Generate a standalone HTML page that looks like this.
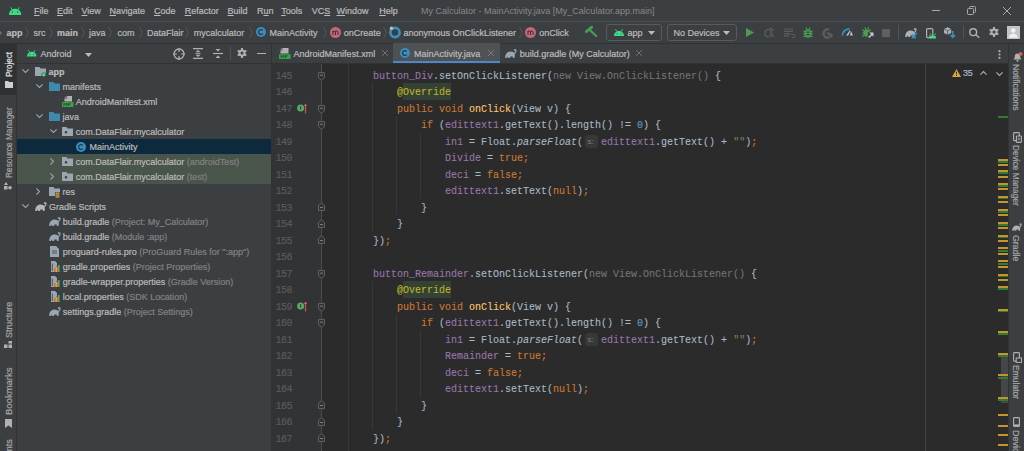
<!DOCTYPE html>
<html><head><meta charset="utf-8">
<style>
*{margin:0;padding:0;box-sizing:border-box}
html,body{width:1024px;height:451px;overflow:hidden;background:#3C3F41}
body{position:relative;font-family:"Liberation Sans",sans-serif;font-size:9px;color:#BBBBBB;-webkit-text-stroke:0.2px}
.a{position:absolute;white-space:pre}
.hl{position:absolute}
svg{position:absolute;overflow:visible}
/* menu */
#menu .a{top:5px;line-height:12px;color:#BBBBBB}
#menu u{text-decoration:underline;text-underline-offset:1px}
#crumb .a{top:27px;line-height:12px;color:#BBBBBB}
.sep{position:absolute;top:27px;width:4px;height:11px}
/* code */
#code{position:absolute;left:0;top:0}
.ln{position:absolute;left:272px;width:20px;margin-top:2px;text-align:right;letter-spacing:-0.5px;font-family:"Liberation Mono",monospace;font-size:10px;color:#585B5E;line-height:16.5px}
.cl{position:absolute;left:325px;-webkit-text-stroke:0.1px;margin-top:2px;font-family:"Liberation Mono",monospace;font-size:10px;line-height:16.5px;color:#A9B7C6;white-space:pre}
.k{color:#CC7832}.f{color:#9876AA}.m{color:#FFC66D}.an{color:#BBB529}.n{color:#6897BB}.s{color:#6A8759}.g{color:#717478}.i{font-style:italic}
.tr{position:absolute;height:15px;line-height:15px;margin-top:1px;white-space:pre;color:#BBBBBB}
.tr .d{color:#808284}
.vt{position:absolute;white-space:pre;font-size:9px;color:#BBBBBB;line-height:10px}
</style></head><body>

<!-- ===== Menu bar ===== -->
<div id="menu">
<svg style="left:9px;top:6.5px" width="12.2" height="8" viewBox="0 0 12.2 8"><path d="M0 8 C0 4.2 2.6 1.8 6.1 1.8 C9.6 1.8 12.2 4.2 12.2 8 Z" fill="#3DDC84"/><path d="M1.8 0.4 L3.1 2.6 M10.4 0.4 L9.1 2.6" stroke="#3DDC84" stroke-width="1"/><circle cx="3.5" cy="5" r="0.7" fill="#2D5B40"/><circle cx="8.7" cy="5" r="0.7" fill="#2D5B40"/></svg>
<div class="a" style="left:34px"><u>F</u>ile</div>
<div class="a" style="left:57px"><u>E</u>dit</div>
<div class="a" style="left:81.5px"><u>V</u>iew</div>
<div class="a" style="left:109.4px"><u>N</u>avigate</div>
<div class="a" style="left:154px"><u>C</u>ode</div>
<div class="a" style="left:184.7px"><u>R</u>efactor</div>
<div class="a" style="left:227.6px"><u>B</u>uild</div>
<div class="a" style="left:257px">R<u>u</u>n</div>
<div class="a" style="left:281.2px"><u>T</u>ools</div>
<div class="a" style="left:311.7px">VC<u>S</u></div>
<div class="a" style="left:336.5px"><u>W</u>indow</div>
<div class="a" style="left:379.2px"><u>H</u>elp</div>
<div class="a" style="left:421px;color:#86888A;-webkit-text-stroke:0">My Calculator - MainActivity.java [My_Calculator.app.main]</div>
<div class="hl" style="left:932px;top:10px;width:8px;height:1px;background:#AAAAAA"></div>
<svg style="left:967px;top:6px" width="10" height="9" viewBox="0 0 10 9"><rect x="0.5" y="2.5" width="6" height="6" rx="1" fill="none" stroke="#AAAAAA"/><path d="M2.5 2.5 V1.5 Q2.5 0.5 3.5 0.5 H7.5 Q8.5 0.5 8.5 1.5 V5.5 Q8.5 6.5 7.5 6.5 H6.5" fill="none" stroke="#AAAAAA"/></svg>
<svg style="left:1003px;top:7px" width="8" height="8" viewBox="0 0 8 8"><path d="M0 0 L8 8 M8 0 L0 8" stroke="#AAAAAA" stroke-width="1"/></svg>
</div>
<div class="hl" style="left:0;top:21px;width:1024px;height:1px;background:#4B4E50"></div>

<!-- ===== Breadcrumb / toolbar ===== -->
<div id="crumb">
<svg style="left:0;top:30.5px" width="2" height="4" viewBox="0 0 2 4"><path d="M0 0 L2 2 L0 4" fill="#6E7072"/></svg>
<div class="a" style="left:6.6px;font-weight:bold">app</div>
<div class="a" style="left:33.6px">src</div>
<div class="a" style="left:57px;font-weight:bold">main</div>
<div class="a" style="left:89px">java</div>
<div class="a" style="left:117.5px">com</div>
<div class="a" style="left:147px">DataFlair</div>
<div class="a" style="left:193.8px">mycalculator</div>
<div class="a" style="left:269.4px">MainActivity</div>
<div class="a" style="left:343.8px">onCreate</div>
<div class="a" style="left:403.4px">anonymous OnClickListener</div>
<div class="a" style="left:539.3px">onClick</div>
<svg class="sep" style="left:24.5px" width="4" height="11" viewBox="0 0 4 11"><path d="M0.5 0 L3.5 5.5 L0.5 11" fill="none" stroke="#5A5D5F" stroke-width="0.8"/></svg>
<svg class="sep" style="left:48.5px" width="4" height="11" viewBox="0 0 4 11"><path d="M0.5 0 L3.5 5.5 L0.5 11" fill="none" stroke="#5A5D5F" stroke-width="0.8"/></svg>
<svg class="sep" style="left:81px" width="4" height="11" viewBox="0 0 4 11"><path d="M0.5 0 L3.5 5.5 L0.5 11" fill="none" stroke="#5A5D5F" stroke-width="0.8"/></svg>
<svg class="sep" style="left:108px" width="4" height="11" viewBox="0 0 4 11"><path d="M0.5 0 L3.5 5.5 L0.5 11" fill="none" stroke="#5A5D5F" stroke-width="0.8"/></svg>
<svg class="sep" style="left:139px" width="4" height="11" viewBox="0 0 4 11"><path d="M0.5 0 L3.5 5.5 L0.5 11" fill="none" stroke="#5A5D5F" stroke-width="0.8"/></svg>
<svg class="sep" style="left:185px" width="4" height="11" viewBox="0 0 4 11"><path d="M0.5 0 L3.5 5.5 L0.5 11" fill="none" stroke="#5A5D5F" stroke-width="0.8"/></svg>
<svg class="sep" style="left:248.5px" width="4" height="11" viewBox="0 0 4 11"><path d="M0.5 0 L3.5 5.5 L0.5 11" fill="none" stroke="#5A5D5F" stroke-width="0.8"/></svg>
<svg class="sep" style="left:322.5px" width="4" height="11" viewBox="0 0 4 11"><path d="M0.5 0 L3.5 5.5 L0.5 11" fill="none" stroke="#5A5D5F" stroke-width="0.8"/></svg>
<svg class="sep" style="left:383px" width="4" height="11" viewBox="0 0 4 11"><path d="M0.5 0 L3.5 5.5 L0.5 11" fill="none" stroke="#5A5D5F" stroke-width="0.8"/></svg>
<svg class="sep" style="left:518.5px" width="4" height="11" viewBox="0 0 4 11"><path d="M0.5 0 L3.5 5.5 L0.5 11" fill="none" stroke="#5A5D5F" stroke-width="0.8"/></svg>

<svg style="left:256px;top:27px" width="10" height="10" viewBox="0 0 10 10"><circle cx="5" cy="5" r="5" fill="#3B8DBA"/><path d="M6.8 3.4 A2.4 2.4 0 1 0 6.8 6.6" fill="none" stroke="#1F3A4D" stroke-width="1.2"/></svg>
<svg style="left:329.5px;top:27px" width="11" height="11" viewBox="0 0 11 11"><circle cx="5.5" cy="5.5" r="5.5" fill="#C4677A"/><path d="M3 8 V4 M3 5 Q3 4 4.2 4 Q5.5 4 5.5 5 V8 M5.5 5 Q5.5 4 6.8 4 Q8 4 8 5 V8" fill="none" stroke="#2B2B2B" stroke-width="0.9"/></svg>
<svg style="left:389px;top:26px" width="12" height="12" viewBox="0 0 12 12"><circle cx="6" cy="6.5" r="4.6" fill="none" stroke="#3592C4" stroke-width="2.6"/><circle cx="2.5" cy="2.2" r="1.8" fill="#BBBBBB"/></svg>
<svg style="left:525px;top:27px" width="11" height="11" viewBox="0 0 11 11"><circle cx="5.5" cy="5.5" r="5.5" fill="#C4677A"/><path d="M3 8 V4 M3 5 Q3 4 4.2 4 Q5.5 4 5.5 5 V8 M5.5 5 Q5.5 4 6.8 4 Q8 4 8 5 V8" fill="none" stroke="#2B2B2B" stroke-width="0.9"/></svg>
<!-- hammer -->
<svg style="left:585px;top:25px" width="13" height="13" viewBox="0 0 13 13"><path d="M1.3 6.6 L6.8 2.2" stroke="#499C54" stroke-width="2.8" stroke-linecap="round"/><path d="M4.6 4.8 L11.2 11" stroke="#499C54" stroke-width="2.2" stroke-linecap="round"/></svg>
<!-- app combo -->
<div class="hl" style="left:605.5px;top:24px;width:56.5px;height:17px;border:1px solid #585B5D;border-radius:3px"></div>
<svg style="left:614px;top:28px" width="10" height="8" viewBox="0 0 10 8"><path d="M0 8 C0 5 2.2 3 5 3 C7.8 3 10 5 10 8 Z" fill="#3DDC84"/><path d="M1.5 1.2 L2.6 3.2 M8.5 1.2 L7.4 3.2" stroke="#3DDC84" stroke-width="0.9"/><circle cx="3" cy="5.8" r="0.55" fill="#2D5B40"/><circle cx="7" cy="5.8" r="0.55" fill="#2D5B40"/></svg>
<div class="a" style="left:627.4px">app</div>
<svg style="left:648px;top:31px" width="7" height="4" viewBox="0 0 7 4"><path d="M0 0 H7 L3.5 4 Z" fill="#BBBBBB"/></svg>
<!-- no devices combo -->
<div class="hl" style="left:666.5px;top:24px;width:70.5px;height:17px;border:1px solid #585B5D;border-radius:3px"></div>
<div class="a" style="left:673.4px">No Devices</div>
<svg style="left:723px;top:31px" width="7" height="4" viewBox="0 0 7 4"><path d="M0 0 H7 L3.5 4 Z" fill="#BBBBBB"/></svg>
<!-- run -->
<svg style="left:746px;top:28px" width="8" height="9" viewBox="0 0 8 9"><path d="M0 0 L8 4.5 L0 9 Z" fill="#499C54"/></svg>
<!-- rerun -->
<svg style="left:763.5px;top:27px" width="11" height="11" viewBox="0 0 11 11"><path d="M7 3.2 A3.8 3.8 0 1 0 4.5 10" fill="none" stroke="#5B5D5F" stroke-width="1.3"/><path d="M6 0.5 L9 3 L6 5.5" fill="none" stroke="#5B5D5F" stroke-width="1.1"/><path d="M5.5 10.5 L7.5 5.5 L9.8 10.5 M6.4 8.7 H8.8" fill="none" stroke="#5B5D5F" stroke-width="1"/></svg>
<!-- apply code changes -->
<svg style="left:784px;top:28px" width="11" height="10" viewBox="0 0 11 10"><path d="M0 1 H9 M0 3.3 H9 M0 5.6 H6 M0 7.9 H5" stroke="#5B5D5F" stroke-width="1.2"/><path d="M7 6.5 H9.5 A1.5 1.5 0 0 1 9.5 9.5 H8" fill="none" stroke="#5B5D5F" stroke-width="1"/></svg>
<!-- debug -->
<svg style="left:803px;top:27px" width="10" height="11" viewBox="0 0 10 11"><ellipse cx="5" cy="6.5" rx="3.6" ry="4.2" fill="#499C54"/><path d="M0.5 4 L2 5 M9.5 4 L8 5 M0 7 H1.6 M10 7 H8.4 M0.5 10 L2 9 M9.5 10 L8 9 M3 0.5 L3.8 2.3 M7 0.5 L6.2 2.3" stroke="#499C54" stroke-width="1.1"/><rect x="3.4" y="4.5" width="3.2" height="1.3" fill="#2B4A2F"/><rect x="3.4" y="7" width="3.2" height="1.3" fill="#2B4A2F"/></svg>
<!-- attach G -->
<svg style="left:821.5px;top:27.5px" width="12" height="11" viewBox="0 0 12 11"><path d="M7 1.6 A4 4.2 0 1 0 7 9.4" fill="none" stroke="#5B5D5F" stroke-width="2.4"/><path d="M4.5 5.2 H7.2 V9" fill="none" stroke="#5B5D5F" stroke-width="1.4"/><path d="M8 4.8 L11.5 7.6 L8 10.4 Z" fill="#5B5D5F"/></svg>
<!-- profiler -->
<svg style="left:841px;top:28px" width="13" height="8" viewBox="0 0 13 8"><path d="M1.3 7.5 A6.5 6.5 0 0 1 8.5 1.2" fill="none" stroke="#3592C4" stroke-width="1.8"/><path d="M5.2 7.5 L8.8 2.2 L9.3 3 L7.2 7.5 Z" fill="#C9CBCD"/><path d="M9.8 2.8 L12 7.5 H9.2 Z" fill="#C9CBCD"/></svg>
<!-- attach debugger -->
<svg style="left:861.5px;top:27px" width="12" height="11" viewBox="0 0 12 11"><ellipse cx="4.6" cy="6" rx="3.2" ry="3.8" fill="#499C54"/><path d="M0.3 2.6 L2.2 4 M8.9 2.6 L7 4 M0 6 H1.6 M0.3 9.6 L2.2 8.2 M3 0.2 L3.8 2.2 M6.8 0.2 L5.6 2.2" stroke="#499C54" stroke-width="1.2"/><path d="M5.8 5.2 H11.6 V10.8 H5.8 Z" fill="#3C3F41"/><path d="M6.8 10.5 L10.6 6.7" stroke="#C9CBCD" stroke-width="1.5"/><path d="M7.3 5.5 H11.5 V9.7 Z" fill="#C9CBCD"/></svg>
<!-- stop -->
<div class="hl" style="left:882px;top:28.5px;width:8px;height:8px;background:#5D5F61"></div>
<div class="hl" style="left:898px;top:25px;width:1px;height:14px;background:#515355"></div>
<!-- sync -->
<svg style="left:904.5px;top:27px" width="13" height="12" viewBox="0 0 13 12"><path transform="translate(0,1)" d="M0.2 9 C0.2 5 2.5 2.6 5.5 2.6 C8 2.6 9.6 3.6 9.9 6 L9.5 9 H8 L7.6 7.4 H5.4 L5 9 H3.3 L2.8 7.6 L1.8 9 Z" fill="#AFB1B3"/><path transform="translate(0,1)" d="M9.2 4.6 C10.9 3.6 11.4 1.6 10.7 0.9 C10.1 0.3 9.2 0.8 9.5 1.9" fill="none" stroke="#AFB1B3" stroke-width="1.3"/><path d="M12 6 L8 10 M7.5 7 V10.5 H11" fill="none" stroke="#3592C4" stroke-width="1.5"/></svg>
<!-- device manager -->
<svg style="left:926px;top:27.5px" width="11" height="11" viewBox="0 0 11 11"><rect x="0.6" y="0.6" width="6.2" height="9" rx="1" fill="none" stroke="#AFB1B3" stroke-width="1.2"/><circle cx="3.7" cy="8" r="0.7" fill="#AFB1B3"/><path d="M3.5 10.5 A3.3 3.3 0 0 1 10.2 10.5 Z" fill="#3DDC84"/><line x1="4.8" y1="6.7" x2="4.2" y2="5.5" stroke="#3DDC84"/><line x1="8.9" y1="6.7" x2="9.5" y2="5.5" stroke="#3DDC84"/></svg>
<!-- sdk -->
<svg style="left:944px;top:27px" width="12" height="12" viewBox="0 0 12 12"><path d="M3.6 0.3 L7.2 2 V6 L3.6 7.8 L0 6 V2 Z" fill="#AFB1B3"/><path d="M0 2 L3.6 3.8 L7.2 2 M3.6 3.8 V7.8" fill="none" stroke="#3C3F41" stroke-width="0.7"/><path d="M8.8 4 V10.5 M6.5 8 L8.8 10.5 L11.1 8" fill="none" stroke="#3592C4" stroke-width="1.5"/></svg>
<div class="hl" style="left:962.5px;top:25px;width:1px;height:14px;background:#515355"></div>
<!-- search -->
<svg style="left:969px;top:27.5px" width="11" height="10" viewBox="0 0 11 10"><circle cx="4.2" cy="4.2" r="3.4" fill="none" stroke="#AFB1B3" stroke-width="1.4"/><path d="M6.8 6.8 L10.3 9.8" stroke="#AFB1B3" stroke-width="1.5"/></svg>
<!-- gear -->
<svg style="left:989px;top:27px" width="10" height="10" viewBox="0 0 10 10"><g fill="#AFB1B3"><circle cx="5" cy="5" r="3.6"/><rect x="4" y="0" width="2" height="10"/><rect x="4" y="0" width="2" height="10" transform="rotate(60 5 5)"/><rect x="4" y="0" width="2" height="10" transform="rotate(120 5 5)"/></g><circle cx="5" cy="5" r="1.5" fill="#3C3F41"/></svg>
<!-- avatar -->
<div class="hl" style="left:1007px;top:26px;width:12.5px;height:12.5px;background:#C4C4C4"></div>
<svg style="left:1007px;top:26px" width="13" height="13" viewBox="0 0 13 13"><circle cx="6.25" cy="4.6" r="2.4" fill="#F2F2F2"/><path d="M1.8 11.8 Q2 7.8 6.25 7.8 Q10.5 7.8 10.7 11.8 Z" fill="#F2F2F2"/></svg>

</div>

<div class="hl" style="left:0;top:43px;width:1024px;height:1px;background:#323232"></div>

<!-- ===== Left stripe ===== -->
<div class="hl" style="left:0;top:44px;width:16px;height:407px;background:#3C3F41"></div>
<div class="hl" style="left:0;top:44px;width:16px;height:51px;background:#2F3133"></div>
<div class="hl" style="left:16px;top:44px;width:1px;height:407px;background:#323232"></div>

<!-- ===== Project panel ===== -->
<svg style="left:26.8px;top:49.3px" width="9.5" height="7.6" viewBox="0 0 10 8"><path d="M0 8 C0 5 2.2 3 5 3 C7.8 3 10 5 10 8 Z" fill="#3DDC84"/><path d="M1.5 1.2 L2.6 3.2 M8.5 1.2 L7.4 3.2" stroke="#3DDC84" stroke-width="0.9"/><circle cx="3" cy="5.8" r="0.55" fill="#2D5B40"/><circle cx="7" cy="5.8" r="0.55" fill="#2D5B40"/></svg>
<div class="a" style="left:40.6px;top:48px;line-height:12px">Android</div>
<svg style="left:84.5px;top:53px" width="7" height="4" viewBox="0 0 7 4"><path d="M0 0 H7 L3.5 4 Z" fill="#BBBBBB"/></svg>
<svg style="left:172.5px;top:47.5px" width="12" height="12" viewBox="0 0 12 12"><circle cx="6" cy="6" r="5" fill="none" stroke="#AFB1B3" stroke-width="1.3"/><path d="M6 0 V4 M6 8 V12 M0 6 H4 M8 6 H12" stroke="#AFB1B3" stroke-width="1.2"/></svg>
<svg style="left:193px;top:48px" width="10" height="11" viewBox="0 0 10 11"><path d="M0 0.6 H10 M0 10.4 H10" stroke="#AFB1B3" stroke-width="1.2"/><path d="M2.5 4.3 L5 2 L7.5 4.3 Z M2.5 6.7 L5 9 L7.5 6.7 Z" fill="#AFB1B3"/><path d="M2.5 5.5 H7.5" stroke="#AFB1B3" stroke-width="0.8"/></svg>
<svg style="left:212.5px;top:48px" width="10" height="11" viewBox="0 0 10 11"><path d="M0 5.5 H10" stroke="#AFB1B3" stroke-width="1.2"/><path d="M2.5 1 L5 3.6 L7.5 1 Z M2.5 10 L5 7.4 L7.5 10 Z" fill="#AFB1B3"/></svg>
<div class="hl" style="left:229.5px;top:46px;width:1px;height:14px;background:#515355"></div>
<svg style="left:237px;top:48px" width="10" height="10" viewBox="0 0 10 10"><g fill="#AFB1B3"><circle cx="5" cy="5" r="3.6"/><rect x="4" y="0" width="2" height="10"/><rect x="4" y="0" width="2" height="10" transform="rotate(60 5 5)"/><rect x="4" y="0" width="2" height="10" transform="rotate(120 5 5)"/></g><circle cx="5" cy="5" r="1.5" fill="#3C3F41"/></svg>
<div class="hl" style="left:257px;top:52.5px;width:9px;height:1.2px;background:#AFB1B3"></div>
<div class="hl" style="left:17px;top:139px;width:254px;height:15px;background:#0D293E"></div>
<div class="hl" style="left:17px;top:154px;width:254px;height:30px;background:#49544A"></div>
<svg style="left:22px;top:69px" width="7" height="4" viewBox="0 0 7 4"><path d="M0.3 0.3 L3.5 3.5 L6.7 0.3" fill="none" stroke="#A0A2A4" stroke-width="1.15"/></svg>
<svg style="left:35px;top:67px" width="11" height="10" viewBox="0 0 11 10"><path d="M0 0 H4.5 L5.5 1.5 H11 V9 H0 Z" fill="#9AA7B0"/><circle cx="8.8" cy="7.8" r="2.4" fill="#3C3F41"/><circle cx="8.8" cy="7.8" r="1.8" fill="#3DDC84"/></svg>
<div class="tr" style="left:48.6px;top:64px"><b>app</b></div>
<svg style="left:36px;top:84px" width="7" height="4" viewBox="0 0 7 4"><path d="M0.3 0.3 L3.5 3.5 L6.7 0.3" fill="none" stroke="#A0A2A4" stroke-width="1.15"/></svg>
<svg style="left:48.7px;top:82px" width="11" height="9" viewBox="0 0 11 9"><path d="M0 0 H4.5 L5.5 1.5 H11 V9 H0 Z" fill="#3D8AAE"/></svg>
<div class="tr" style="left:62.5px;top:79px">manifests</div>
<svg style="left:62px;top:96px" width="12" height="11" viewBox="0 0 12 11"><path d="M4.5 0 H10 V5.5 H2.5 V2 Z" fill="#AFB1B3"/><path d="M2.5 2.3 H4.7 V0.2" fill="none" stroke="#3C3F41" stroke-width="0.7"/><rect x="0" y="6" width="11.5" height="5" fill="#3B9F4C"/><path d="M1.8 10 V7 L3.2 8.7 L4.6 7 V10 M6.3 10 V7 H8.8 M6.3 8.5 H8.2" fill="none" stroke="#1D4F25" stroke-width="0.8"/></svg>
<div class="tr" style="left:75.8px;top:94px">AndroidManifest.xml</div>
<svg style="left:36px;top:114px" width="7" height="4" viewBox="0 0 7 4"><path d="M0.3 0.3 L3.5 3.5 L6.7 0.3" fill="none" stroke="#A0A2A4" stroke-width="1.15"/></svg>
<svg style="left:48.7px;top:112px" width="11" height="9" viewBox="0 0 11 9"><path d="M0 0 H4.5 L5.5 1.5 H11 V9 H0 Z" fill="#3D8AAE"/></svg>
<div class="tr" style="left:62.5px;top:109px">java</div>
<svg style="left:50px;top:129px" width="7" height="4" viewBox="0 0 7 4"><path d="M0.3 0.3 L3.5 3.5 L6.7 0.3" fill="none" stroke="#A0A2A4" stroke-width="1.15"/></svg>
<svg style="left:62px;top:127px" width="11" height="9" viewBox="0 0 11 9"><path d="M0 0 H4.5 L5.5 1.5 H11 V9 H0 Z" fill="#9AA7B0"/><circle cx="4" cy="5.3" r="1.2" fill="#3C3F41"/></svg>
<div class="tr" style="left:75.8px;top:124px">com.DataFlair.mycalculator</div>
<svg style="left:76px;top:141.5px" width="10" height="10" viewBox="0 0 10 10"><circle cx="5" cy="5" r="5" fill="#3B8DBA"/><path d="M6.8 3.4 A2.4 2.4 0 1 0 6.8 6.6" fill="none" stroke="#1F3A4D" stroke-width="1.2"/></svg>
<div class="tr" style="left:89.5px;top:139px">MainActivity</div>
<svg style="left:50px;top:158px" width="4" height="7" viewBox="0 0 4 7"><path d="M0.3 0.3 L3.5 3.5 L0.3 6.7" fill="none" stroke="#A0A2A4" stroke-width="1.15"/></svg>
<svg style="left:62px;top:157px" width="11" height="9" viewBox="0 0 11 9"><path d="M0 0 H4.5 L5.5 1.5 H11 V9 H0 Z" fill="#9AA7B0"/><circle cx="4" cy="5.3" r="1.2" fill="#3C3F41"/></svg>
<div class="tr" style="left:75.8px;top:154px">com.DataFlair.mycalculator <span class="d">(androidTest)</span></div>
<svg style="left:50px;top:173px" width="4" height="7" viewBox="0 0 4 7"><path d="M0.3 0.3 L3.5 3.5 L0.3 6.7" fill="none" stroke="#A0A2A4" stroke-width="1.15"/></svg>
<svg style="left:62px;top:172px" width="11" height="9" viewBox="0 0 11 9"><path d="M0 0 H4.5 L5.5 1.5 H11 V9 H0 Z" fill="#9AA7B0"/><circle cx="4" cy="5.3" r="1.2" fill="#3C3F41"/></svg>
<div class="tr" style="left:75.8px;top:169px">com.DataFlair.mycalculator <span class="d">(test)</span></div>
<svg style="left:36px;top:188px" width="4" height="7" viewBox="0 0 4 7"><path d="M0.3 0.3 L3.5 3.5 L0.3 6.7" fill="none" stroke="#A0A2A4" stroke-width="1.15"/></svg>
<svg style="left:49px;top:186.5px" width="12" height="11" viewBox="0 0 12 11"><path d="M0 0 H4.5 L5.5 1.5 H11 V9 H0 Z" fill="#9AA7B0"/><rect x="6" y="5" width="5" height="6" fill="#3C3F41"/><rect x="6.5" y="5.5" width="4" height="1.3" fill="#D9A343"/><rect x="6.5" y="7.4" width="4" height="1.3" fill="#D9A343"/><rect x="6.5" y="9.3" width="4" height="1.3" fill="#D9A343"/></svg>
<div class="tr" style="left:62.5px;top:184px">res</div>
<svg style="left:22px;top:204px" width="7" height="4" viewBox="0 0 7 4"><path d="M0.3 0.3 L3.5 3.5 L6.7 0.3" fill="none" stroke="#A0A2A4" stroke-width="1.15"/></svg>
<svg style="left:34.5px;top:202px" width="12" height="9" viewBox="0 0 12 9"><path d="M0.2 9 C0.2 5 2.5 2.6 5.5 2.6 C8 2.6 9.6 3.6 9.9 6 L9.5 9 H8 L7.6 7.4 H5.4 L5 9 H3.3 L2.8 7.6 L1.8 9 Z" fill="#B5B7B9"/><path d="M9.2 4.6 C10.9 3.6 11.4 1.6 10.7 0.9 C10.1 0.3 9.2 0.8 9.5 1.9" fill="none" stroke="#B5B7B9" stroke-width="1.3"/></svg>
<div class="tr" style="left:49px;top:199px">Gradle Scripts</div>
<svg style="left:48.5px;top:216.5px" width="12" height="9" viewBox="0 0 12 9"><path d="M0.2 9 C0.2 5 2.5 2.6 5.5 2.6 C8 2.6 9.6 3.6 9.9 6 L9.5 9 H8 L7.6 7.4 H5.4 L5 9 H3.3 L2.8 7.6 L1.8 9 Z" fill="#9AA7B0"/><path d="M9.2 4.6 C10.9 3.6 11.4 1.6 10.7 0.9 C10.1 0.3 9.2 0.8 9.5 1.9" fill="none" stroke="#9AA7B0" stroke-width="1.3"/></svg>
<div class="tr" style="left:62.7px;top:214px">build.gradle <span class="d">(Project: My_Calculator)</span></div>
<svg style="left:48.5px;top:231.5px" width="12" height="9" viewBox="0 0 12 9"><path d="M0.2 9 C0.2 5 2.5 2.6 5.5 2.6 C8 2.6 9.6 3.6 9.9 6 L9.5 9 H8 L7.6 7.4 H5.4 L5 9 H3.3 L2.8 7.6 L1.8 9 Z" fill="#9AA7B0"/><path d="M9.2 4.6 C10.9 3.6 11.4 1.6 10.7 0.9 C10.1 0.3 9.2 0.8 9.5 1.9" fill="none" stroke="#9AA7B0" stroke-width="1.3"/></svg>
<div class="tr" style="left:62.7px;top:229px">build.gradle <span class="d">(Module :app)</span></div>
<svg style="left:50px;top:246px" width="9" height="11" viewBox="0 0 9 11"><path d="M0 0 H6 L9 3 V11 H0 Z" fill="#9AA7B0"/><path d="M2 5 H7 M2 7 H7" stroke="#3C3F41" stroke-width="0.8"/></svg>
<div class="tr" style="left:62.7px;top:244px">proguard-rules.pro <span class="d">(ProGuard Rules for ":app")</span></div>
<svg style="left:50px;top:261px" width="10" height="11" viewBox="0 0 10 11"><path d="M1 0 H5 L7 2 V5 H6 V11 H1 Z" fill="#9AA7B0"/><path d="M2.3 2.5 V10" stroke="#3C3F41" stroke-width="0.8"/><rect x="4" y="7" width="1.6" height="4" fill="#E06C3B"/><rect x="6" y="5.5" width="1.6" height="5.5" fill="#E8A33D"/><rect x="8" y="4" width="1.6" height="7" fill="#59A869"/></svg>
<div class="tr" style="left:62.7px;top:259px">gradle.properties <span class="d">(Project Properties)</span></div>
<svg style="left:50px;top:276px" width="10" height="11" viewBox="0 0 10 11"><path d="M1 0 H5 L7 2 V5 H6 V11 H1 Z" fill="#9AA7B0"/><path d="M2.3 2.5 V10" stroke="#3C3F41" stroke-width="0.8"/><rect x="4" y="7" width="1.6" height="4" fill="#E06C3B"/><rect x="6" y="5.5" width="1.6" height="5.5" fill="#E8A33D"/><rect x="8" y="4" width="1.6" height="7" fill="#59A869"/></svg>
<div class="tr" style="left:62.7px;top:274px">gradle-wrapper.properties <span class="d">(Gradle Version)</span></div>
<svg style="left:50px;top:291px" width="10" height="11" viewBox="0 0 10 11"><path d="M1 0 H5 L7 2 V5 H6 V11 H1 Z" fill="#9AA7B0"/><path d="M2.3 2.5 V10" stroke="#3C3F41" stroke-width="0.8"/><rect x="4" y="7" width="1.6" height="4" fill="#E06C3B"/><rect x="6" y="5.5" width="1.6" height="5.5" fill="#E8A33D"/><rect x="8" y="4" width="1.6" height="7" fill="#59A869"/></svg>
<div class="tr" style="left:62.7px;top:289px">local.properties <span class="d">(SDK Location)</span></div>
<svg style="left:48.5px;top:306.5px" width="12" height="9" viewBox="0 0 12 9"><path d="M0.2 9 C0.2 5 2.5 2.6 5.5 2.6 C8 2.6 9.6 3.6 9.9 6 L9.5 9 H8 L7.6 7.4 H5.4 L5 9 H3.3 L2.8 7.6 L1.8 9 Z" fill="#9AA7B0"/><path d="M9.2 4.6 C10.9 3.6 11.4 1.6 10.7 0.9 C10.1 0.3 9.2 0.8 9.5 1.9" fill="none" stroke="#9AA7B0" stroke-width="1.3"/></svg>
<div class="tr" style="left:62.7px;top:304px">settings.gradle <span class="d">(Project Settings)</span></div>
<div class="hl" style="left:17px;top:63px;width:254px;height:1px;background:#323232"></div>
<div class="hl" style="left:271px;top:44px;width:1px;height:407px;background:#323232"></div>

<!-- ===== Editor ===== -->
<div class="hl" style="left:272px;top:63px;width:736px;height:1px;background:#323232"></div>
<div class="hl" style="left:272px;top:64px;width:50px;height:387px;background:#313335"></div>
<div class="hl" style="left:322px;top:64px;width:686px;height:387px;background:#2B2B2B"></div>

<div id="code">
<div class="hl" style="left:403px;top:83.4px;width:48px;height:16.5px;background:#344134"></div>
<div class="hl" style="left:403px;top:281.4px;width:48px;height:16.5px;background:#344134"></div>
<div class="hl" style="left:585px;top:134.6px;width:12.5px;height:13px;background:#383838;border-radius:3px"></div>
<div class="a" style="left:587.5px;top:135.9px;font-size:8px;line-height:12px;color:#7E7E7E;-webkit-text-stroke:0">s:</div>
<div class="hl" style="left:585px;top:332.6px;width:12.5px;height:13px;background:#383838;border-radius:3px"></div>
<div class="a" style="left:587.5px;top:333.9px;font-size:8px;line-height:12px;color:#7E7E7E;-webkit-text-stroke:0">s:</div>
<div class="hl" style="left:348px;top:64px;width:1px;height:387px;background:#363738"></div>
<div class="hl" style="left:372px;top:83.4px;width:1px;height:148.5px;background:#363738"></div>
<div class="hl" style="left:372px;top:281.4px;width:1px;height:148.5px;background:#363738"></div>
<div class="hl" style="left:396px;top:116.4px;width:1px;height:99.0px;background:#363738"></div>
<div class="hl" style="left:396px;top:314.4px;width:1px;height:99.0px;background:#363738"></div>
<div class="hl" style="left:420px;top:132.9px;width:1px;height:66.0px;background:#363738"></div>
<div class="hl" style="left:420px;top:330.9px;width:1px;height:66.0px;background:#363738"></div>
<div class="hl" style="left:925px;top:64px;width:1px;height:387px;background:#424242"></div>
<div class="hl" style="left:320.5px;top:64px;width:1px;height:387px;background:#4A4C4E"></div>
<div class="ln" style="top:66.9px">145</div>
<div class="cl" style="top:66.9px">        <span class="f">button_Div</span>.setOnClickListener(<span class="g">new View.OnClickListener()</span> {</div>
<div class="ln" style="top:83.4px">146</div>
<div class="cl" style="top:83.4px">            <span class="an">@Override</span></div>
<div class="ln" style="top:99.9px">147</div>
<div class="cl" style="top:99.9px">            <span class="k">public void </span><span class="m">onClick</span>(View v) {</div>
<div class="ln" style="top:116.4px">148</div>
<div class="cl" style="top:116.4px">                <span class="k">if </span>(<span class="f">edittext1</span>.getText().length() != <span class="n">0</span>) {</div>
<div class="ln" style="top:132.9px">149</div>
<div class="cl" style="top:132.9px">                    <span class="f">in1 </span>= Float.<span class="i">parseFloat</span>(   <span class="f">edittext1</span>.getText() + <span class="s">""</span>)<span class="k">;</span></div>
<div class="ln" style="top:149.4px">150</div>
<div class="cl" style="top:149.4px">                    <span class="f">Divide </span>= <span class="k">true;</span></div>
<div class="ln" style="top:165.9px">151</div>
<div class="cl" style="top:165.9px">                    <span class="f">deci </span>= <span class="k">false;</span></div>
<div class="ln" style="top:182.4px">152</div>
<div class="cl" style="top:182.4px">                    <span class="f">edittext1</span>.setText(<span class="k">null</span>)<span class="k">;</span></div>
<div class="ln" style="top:198.9px">153</div>
<div class="cl" style="top:198.9px">                }</div>
<div class="ln" style="top:215.4px">154</div>
<div class="cl" style="top:215.4px">            }</div>
<div class="ln" style="top:231.9px">155</div>
<div class="cl" style="top:231.9px">        })<span class="k">;</span></div>
<div class="ln" style="top:248.4px">156</div>
<div class="cl" style="top:248.4px"></div>
<div class="ln" style="top:264.9px">157</div>
<div class="cl" style="top:264.9px">        <span class="f">button_Remainder</span>.setOnClickListener(<span class="g">new View.OnClickListener()</span> {</div>
<div class="ln" style="top:281.4px">158</div>
<div class="cl" style="top:281.4px">            <span class="an">@Override</span></div>
<div class="ln" style="top:297.9px">159</div>
<div class="cl" style="top:297.9px">            <span class="k">public void </span><span class="m">onClick</span>(View v) {</div>
<div class="ln" style="top:314.4px">160</div>
<div class="cl" style="top:314.4px">                <span class="k">if </span>(<span class="f">edittext1</span>.getText().length() != <span class="n">0</span>) {</div>
<div class="ln" style="top:330.9px">161</div>
<div class="cl" style="top:330.9px">                    <span class="f">in1 </span>= Float.<span class="i">parseFloat</span>(   <span class="f">edittext1</span>.getText() + <span class="s">""</span>)<span class="k">;</span></div>
<div class="ln" style="top:347.4px">162</div>
<div class="cl" style="top:347.4px">                    <span class="f">Remainder </span>= <span class="k">true;</span></div>
<div class="ln" style="top:363.9px">163</div>
<div class="cl" style="top:363.9px">                    <span class="f">deci </span>= <span class="k">false;</span></div>
<div class="ln" style="top:380.4px">164</div>
<div class="cl" style="top:380.4px">                    <span class="f">edittext1</span>.setText(<span class="k">null</span>)<span class="k">;</span></div>
<div class="ln" style="top:396.9px">165</div>
<div class="cl" style="top:396.9px">                }</div>
<div class="ln" style="top:413.4px">166</div>
<div class="cl" style="top:413.4px">            }</div>
<div class="ln" style="top:429.9px">167</div>
<div class="cl" style="top:429.9px">        })<span class="k">;</span></div>
</div>
<svg style="left:318px;top:71.8px" width="8" height="9" viewBox="0 0 8 9"><path d="M0.5 0.5 H6.5 V5.7 L3.5 8.5 L0.5 5.7 Z" fill="#313335" stroke="#5E6163" stroke-width="1"/><path d="M2 3.2 H5" stroke="#7A7D80" stroke-width="1"/></svg>
<svg style="left:318px;top:104.8px" width="8" height="9" viewBox="0 0 8 9"><path d="M0.5 0.5 H6.5 V5.7 L3.5 8.5 L0.5 5.7 Z" fill="#313335" stroke="#5E6163" stroke-width="1"/><path d="M2 3.2 H5" stroke="#7A7D80" stroke-width="1"/></svg>
<svg style="left:318px;top:121.3px" width="8" height="9" viewBox="0 0 8 9"><path d="M0.5 0.5 H6.5 V5.7 L3.5 8.5 L0.5 5.7 Z" fill="#313335" stroke="#5E6163" stroke-width="1"/><path d="M2 3.2 H5" stroke="#7A7D80" stroke-width="1"/></svg>
<svg style="left:318px;top:269.8px" width="8" height="9" viewBox="0 0 8 9"><path d="M0.5 0.5 H6.5 V5.7 L3.5 8.5 L0.5 5.7 Z" fill="#313335" stroke="#5E6163" stroke-width="1"/><path d="M2 3.2 H5" stroke="#7A7D80" stroke-width="1"/></svg>
<svg style="left:318px;top:302.8px" width="8" height="9" viewBox="0 0 8 9"><path d="M0.5 0.5 H6.5 V5.7 L3.5 8.5 L0.5 5.7 Z" fill="#313335" stroke="#5E6163" stroke-width="1"/><path d="M2 3.2 H5" stroke="#7A7D80" stroke-width="1"/></svg>
<svg style="left:318px;top:319.3px" width="8" height="9" viewBox="0 0 8 9"><path d="M0.5 0.5 H6.5 V5.7 L3.5 8.5 L0.5 5.7 Z" fill="#313335" stroke="#5E6163" stroke-width="1"/><path d="M2 3.2 H5" stroke="#7A7D80" stroke-width="1"/></svg>
<svg style="left:318px;top:202.0px" width="8" height="9" viewBox="0 0 8 9"><path d="M3.5 0.5 L6.5 3.3 V8.5 H0.5 V3.3 Z" fill="#313335" stroke="#5E6163" stroke-width="1"/><path d="M2 5.5 H5" stroke="#7A7D80" stroke-width="1"/></svg>
<svg style="left:318px;top:218.5px" width="8" height="9" viewBox="0 0 8 9"><path d="M3.5 0.5 L6.5 3.3 V8.5 H0.5 V3.3 Z" fill="#313335" stroke="#5E6163" stroke-width="1"/><path d="M2 5.5 H5" stroke="#7A7D80" stroke-width="1"/></svg>
<svg style="left:318px;top:235.0px" width="8" height="9" viewBox="0 0 8 9"><path d="M3.5 0.5 L6.5 3.3 V8.5 H0.5 V3.3 Z" fill="#313335" stroke="#5E6163" stroke-width="1"/><path d="M2 5.5 H5" stroke="#7A7D80" stroke-width="1"/></svg>
<svg style="left:318px;top:400.0px" width="8" height="9" viewBox="0 0 8 9"><path d="M3.5 0.5 L6.5 3.3 V8.5 H0.5 V3.3 Z" fill="#313335" stroke="#5E6163" stroke-width="1"/><path d="M2 5.5 H5" stroke="#7A7D80" stroke-width="1"/></svg>
<svg style="left:318px;top:416.5px" width="8" height="9" viewBox="0 0 8 9"><path d="M3.5 0.5 L6.5 3.3 V8.5 H0.5 V3.3 Z" fill="#313335" stroke="#5E6163" stroke-width="1"/><path d="M2 5.5 H5" stroke="#7A7D80" stroke-width="1"/></svg>
<svg style="left:318px;top:433.0px" width="8" height="9" viewBox="0 0 8 9"><path d="M3.5 0.5 L6.5 3.3 V8.5 H0.5 V3.3 Z" fill="#313335" stroke="#5E6163" stroke-width="1"/><path d="M2 5.5 H5" stroke="#7A7D80" stroke-width="1"/></svg>
<svg style="left:296.5px;top:102.5px" width="11" height="11" viewBox="0 0 11 11"><circle cx="3.6" cy="4.9" r="3.5" fill="#59A869"/><path d="M3.6 3.3 V6.5" stroke="#2B4A2F" stroke-width="1.2"/><path d="M8.5 10.5 V2.5" stroke="#C75450" stroke-width="1.3"/><path d="M6.7 3 L8.5 0.5 L10.3 3 Z" fill="#E05555"/></svg>
<svg style="left:296.5px;top:300.5px" width="11" height="11" viewBox="0 0 11 11"><circle cx="3.6" cy="4.9" r="3.5" fill="#59A869"/><path d="M3.6 3.3 V6.5" stroke="#2B4A2F" stroke-width="1.2"/><path d="M8.5 10.5 V2.5" stroke="#C75450" stroke-width="1.3"/><path d="M6.7 3 L8.5 0.5 L10.3 3 Z" fill="#E05555"/></svg>
<!-- tabs -->
<div class="hl" style="left:392.5px;top:43px;width:107px;height:20px;background:#4E5254"></div>
<div class="hl" style="left:392.5px;top:61px;width:107px;height:2px;background:#4A88C7"></div>
<svg style="left:278.5px;top:48px" width="12" height="11" viewBox="0 0 12 11"><path d="M3 0 H9.5 V5.5 H1.5 V1.8 Z" fill="#AFB1B3"/><path d="M1.5 2.2 H3.2 V0.3" fill="none" stroke="#3C3F41" stroke-width="0.7"/><rect x="0" y="6.2" width="11.6" height="4.8" fill="#3B9F4C"/><path d="M2 10 V7.3 L3.3 8.8 L4.6 7.3 V10 M6.3 10 V7.3 H8.6 M6.3 8.6 H8" fill="none" stroke="#1D4F25" stroke-width="0.8"/></svg>
<div class="a" style="left:293.6px;top:48px;line-height:12px">AndroidManifest.xml</div>
<svg style="left:381.8px;top:50px" width="6" height="6" viewBox="0 0 6 6"><path d="M0 0 L6 6 M6 0 L0 6" stroke="#6E7072" stroke-width="1"/></svg>
<svg style="left:399.6px;top:48.3px" width="10" height="10" viewBox="0 0 10 10"><circle cx="5" cy="5" r="5" fill="#3B8DBA"/><path d="M6.8 3.4 A2.4 2.4 0 1 0 6.8 6.6" fill="none" stroke="#1F3A4D" stroke-width="1.2"/></svg>
<div class="a" style="left:414px;top:48px;line-height:12px">MainActivity.java</div>
<svg style="left:487.8px;top:50px" width="6" height="6" viewBox="0 0 6 6"><path d="M0 0 L6 6 M6 0 L0 6" stroke="#7A7C7E" stroke-width="1"/></svg>
<svg style="left:504.5px;top:48.5px" width="12" height="9" viewBox="0 0 12 9"><path d="M0.2 9 C0.2 5 2.5 2.6 5.5 2.6 C8 2.6 9.6 3.6 9.9 6 L9.5 9 H8 L7.6 7.4 H5.4 L5 9 H3.3 L2.8 7.6 L1.8 9 Z" fill="#9AA7B0"/><path d="M9.2 4.6 C10.9 3.6 11.4 1.6 10.7 0.9 C10.1 0.3 9.2 0.8 9.5 1.9" fill="none" stroke="#9AA7B0" stroke-width="1.3"/></svg>
<div class="a" style="left:519.7px;top:48px;line-height:12px">build.gradle (My Calculator)</div>
<svg style="left:636px;top:50px" width="6" height="6" viewBox="0 0 6 6"><path d="M0 0 L6 6 M6 0 L0 6" stroke="#6E7072" stroke-width="1"/></svg>
<svg style="left:998px;top:49.5px" width="3" height="9" viewBox="0 0 3 9"><circle cx="1.5" cy="1.2" r="1.1" fill="#AFB1B3"/><circle cx="1.5" cy="4.5" r="1.1" fill="#AFB1B3"/><circle cx="1.5" cy="7.8" r="1.1" fill="#AFB1B3"/></svg>
<!-- warning indicator -->
<svg style="left:952px;top:69px" width="9" height="8" viewBox="0 0 9 8"><path d="M4.5 0 L9 8 H0 Z" fill="#D8A93A"/><path d="M4.5 2.5 V5.2 M4.5 6 V7" stroke="#2B2B2B" stroke-width="1"/></svg>
<div class="a" style="left:963px;top:67px;line-height:12px;color:#A9B7C6;letter-spacing:-0.3px">35</div>
<svg style="left:980px;top:71px" width="7" height="4" viewBox="0 0 7 4"><path d="M0.4 3.6 L3.5 0.5 L6.6 3.6" fill="none" stroke="#AFB1B3" stroke-width="1.1"/></svg>
<svg style="left:996px;top:72px" width="7" height="4" viewBox="0 0 7 4"><path d="M0.4 0.4 L3.5 3.5 L6.6 0.4" fill="none" stroke="#AFB1B3" stroke-width="1.1"/></svg>
<div class="hl" style="left:1001px;top:355px;width:7px;height:48px;background:rgba(90,93,95,0.55)"></div>
<div class="hl" style="left:998px;top:115.8px;width:10px;height:2px;background:#2F7D32"></div>
<div class="hl" style="left:998px;top:160.6px;width:10px;height:2px;background:#2F7D32"></div>
<div class="hl" style="left:998px;top:171.9px;width:10px;height:2px;background:#2F7D32"></div>
<div class="hl" style="left:998px;top:184.7px;width:10px;height:2px;background:#2F7D32"></div>
<div class="hl" style="left:998px;top:197.4px;width:10px;height:2px;background:#2F7D32"></div>
<div class="hl" style="left:998px;top:211.1px;width:10px;height:2px;background:#2F7D32"></div>
<div class="hl" style="left:998px;top:223.7px;width:10px;height:2px;background:#2F7D32"></div>
<div class="hl" style="left:998px;top:236.4px;width:10px;height:2px;background:#2F7D32"></div>
<div class="hl" style="left:998px;top:249.7px;width:10px;height:2px;background:#2F7D32"></div>
<div class="hl" style="left:998px;top:262.5px;width:10px;height:2px;background:#2F7D32"></div>
<div class="hl" style="left:998px;top:275.2px;width:10px;height:2px;background:#2F7D32"></div>
<div class="hl" style="left:998px;top:288.2px;width:10px;height:2px;background:#2F7D32"></div>
<div class="hl" style="left:998px;top:310.4px;width:10px;height:2px;background:#2F7D32"></div>
<div class="hl" style="left:998px;top:333.2px;width:10px;height:2px;background:#2F7D32"></div>
<div class="hl" style="left:998px;top:354.9px;width:10px;height:2px;background:#2F7D32"></div>
<div class="hl" style="left:998px;top:377.2px;width:10px;height:2px;background:#2F7D32"></div>
<div class="hl" style="left:998px;top:399.2px;width:10px;height:2px;background:#2F7D32"></div>
<div class="hl" style="left:998px;top:158.7px;width:10px;height:2px;background:#C4952A"></div>
<div class="hl" style="left:998px;top:164.2px;width:10px;height:2px;background:#C4952A"></div>
<div class="hl" style="left:998px;top:169.5px;width:10px;height:2px;background:#C4952A"></div>
<div class="hl" style="left:998px;top:175.6px;width:10px;height:2px;background:#C4952A"></div>
<div class="hl" style="left:998px;top:182.8px;width:10px;height:2px;background:#C4952A"></div>
<div class="hl" style="left:998px;top:188.2px;width:10px;height:2px;background:#C4952A"></div>
<div class="hl" style="left:998px;top:195.8px;width:10px;height:2px;background:#C4952A"></div>
<div class="hl" style="left:998px;top:201.0px;width:10px;height:2px;background:#C4952A"></div>
<div class="hl" style="left:998px;top:208.6px;width:10px;height:2px;background:#C4952A"></div>
<div class="hl" style="left:998px;top:214.4px;width:10px;height:2px;background:#C4952A"></div>
<div class="hl" style="left:998px;top:221.6px;width:10px;height:2px;background:#C4952A"></div>
<div class="hl" style="left:998px;top:227.3px;width:10px;height:2px;background:#C4952A"></div>
<div class="hl" style="left:998px;top:234.8px;width:10px;height:2px;background:#C4952A"></div>
<div class="hl" style="left:998px;top:240.0px;width:10px;height:2px;background:#C4952A"></div>
<div class="hl" style="left:998px;top:247.2px;width:10px;height:2px;background:#C4952A"></div>
<div class="hl" style="left:998px;top:253.0px;width:10px;height:2px;background:#C4952A"></div>
<div class="hl" style="left:998px;top:260.2px;width:10px;height:2px;background:#C4952A"></div>
<div class="hl" style="left:998px;top:266.4px;width:10px;height:2px;background:#C4952A"></div>
<div class="hl" style="left:998px;top:273.5px;width:10px;height:2px;background:#C4952A"></div>
<div class="hl" style="left:998px;top:279.0px;width:10px;height:2px;background:#C4952A"></div>
<div class="hl" style="left:998px;top:286.4px;width:10px;height:2px;background:#C4952A"></div>
<div class="hl" style="left:998px;top:308.6px;width:10px;height:2px;background:#C4952A"></div>
<div class="hl" style="left:998px;top:330.8px;width:10px;height:2px;background:#C4952A"></div>
<div class="hl" style="left:998px;top:353.0px;width:10px;height:2px;background:#C4952A"></div>
<div class="hl" style="left:998px;top:374.2px;width:10px;height:2px;background:#C4952A"></div>
<div class="hl" style="left:998px;top:397.2px;width:10px;height:2px;background:#C4952A"></div>
<div class="hl" style="left:998px;top:414.2px;width:10px;height:2px;background:#C4952A"></div>
<div class="hl" style="left:998px;top:425.2px;width:10px;height:2px;background:#C4952A"></div>
<div class="hl" style="left:998px;top:434.2px;width:10px;height:2px;background:#C4952A"></div>
<div class="hl" style="left:998px;top:443.8px;width:10px;height:2px;background:#C4952A"></div>
<svg style="left:4.5px;top:81px" width="8" height="7" viewBox="0 0 8 7"><path d="M0 0 H3.2 L4 1 H8 V7 H0 Z" fill="#CFCFCF"/></svg>
<svg style="left:4px;top:182px" width="8" height="8" viewBox="0 0 8 8"><path d="M2 0 L4 3 H0 Z" fill="#AFB1B3"/><rect x="0" y="4" width="3.5" height="3.5" fill="#AFB1B3"/><circle cx="6" cy="5.8" r="1.8" fill="#AFB1B3"/></svg>
<svg style="left:4px;top:341px" width="8" height="8" viewBox="0 0 8 8"><rect x="0" y="3.5" width="3.5" height="3.5" fill="#AFB1B3"/><rect x="4.5" y="3.5" width="3.5" height="3.5" fill="#AFB1B3"/><rect x="4.5" y="0" width="3.5" height="2.5" fill="#AFB1B3"/></svg>
<svg style="left:4.5px;top:418.5px" width="7" height="9" viewBox="0 0 7 9"><path d="M0 0 H7 V9 L3.5 6.5 L0 9 Z" fill="#AFB1B3"/></svg>
<!-- ===== Right stripe ===== -->
<svg style="left:1012.5px;top:52px" width="10" height="10" viewBox="0 0 10 10"><path d="M0.5 7.6 Q1.8 6.6 1.8 4.6 Q1.8 1.4 4.5 1.4 Q7.2 1.4 7.2 4.6 Q7.2 6.6 8.5 7.6 Z" fill="#AFB1B3"/><circle cx="4.5" cy="8.8" r="1" fill="#AFB1B3"/><circle cx="7.6" cy="1.9" r="1.9" fill="#E55B5B"/></svg>
<svg style="left:1012.5px;top:131.5px" width="9" height="11" viewBox="0 0 9 11"><rect x="0.6" y="0.6" width="5.8" height="8" rx="0.8" fill="none" stroke="#AFB1B3" stroke-width="1.1"/><rect x="3.4" y="4" width="5" height="6.4" rx="0.6" fill="#3C3F41" stroke="#AFB1B3" stroke-width="1.1"/><path d="M5.9 5.5 V8.5 M4.6 7 H7.2" stroke="#AFB1B3" stroke-width="0.7"/></svg>
<svg style="left:1011.8px;top:223.3px" width="10" height="8" viewBox="0 0 12 9"><path d="M0.2 9 C0.2 5 2.5 2.6 5.5 2.6 C8 2.6 9.6 3.6 9.9 6 L9.5 9 H8 L7.6 7.4 H5.4 L5 9 H3.3 L2.8 7.6 L1.8 9 Z" fill="#AFB1B3"/><path d="M9.2 4.6 C10.9 3.6 11.4 1.6 10.7 0.9 C10.1 0.3 9.2 0.8 9.5 1.9" fill="none" stroke="#AFB1B3" stroke-width="1.3"/></svg>
<svg style="left:1012.5px;top:352px" width="9" height="11" viewBox="0 0 9 11"><rect x="0.6" y="0.6" width="5.8" height="8.5" rx="0.8" fill="none" stroke="#AFB1B3" stroke-width="1.1"/><rect x="3.2" y="6" width="5.3" height="4.4" fill="#3C3F41" stroke="#AFB1B3" stroke-width="1"/></svg>
<svg style="left:1013.3px;top:417px" width="7" height="10" viewBox="0 0 7 10"><rect x="0.6" y="0.6" width="5.8" height="8.8" rx="0.8" fill="none" stroke="#AFB1B3" stroke-width="1.1"/><rect x="0.6" y="7.4" width="5.8" height="2" fill="#AFB1B3"/></svg>
<div class="hl" style="left:1008px;top:44px;width:1px;height:407px;background:#323232"></div>

<div class="vt" style="left:4.4px;top:76.5px;color:#E2E2E2;transform-origin:0 0;transform:rotate(-90deg) scaleX(0.889)">Project</div>
<div class="vt" style="left:4.4px;top:177.5px;color:#A4A6A8;transform-origin:0 0;transform:rotate(-90deg) scaleX(0.924)">Resource Manager</div>
<div class="vt" style="left:4.4px;top:337.5px;color:#A4A6A8;transform-origin:0 0;transform:rotate(-90deg) scaleX(0.989)">Structure</div>
<div class="vt" style="left:4.4px;top:414.9px;color:#A4A6A8;transform-origin:0 0;transform:rotate(-90deg) scaleX(1.056)">Bookmarks</div>
<div class="vt" style="left:4.4px;top:494.1px;color:#A4A6A8;transform-origin:0 0;transform:rotate(-90deg) scaleX(1.000)">Build Variants</div>
<div class="vt" style="left:1020.5px;top:64.4px;color:#A4A6A8;transform-origin:0 0;transform:rotate(90deg) scaleX(0.948)">Notifications</div>
<div class="vt" style="left:1020.5px;top:144.8px;color:#A4A6A8;transform-origin:0 0;transform:rotate(90deg) scaleX(0.926)">Device Manager</div>
<div class="vt" style="left:1020.5px;top:235px;color:#A4A6A8;transform-origin:0 0;transform:rotate(90deg) scaleX(0.98)">Gradle</div>
<div class="vt" style="left:1020.5px;top:365.2px;color:#A4A6A8;transform-origin:0 0;transform:rotate(90deg) scaleX(0.946)">Emulator</div>
<div class="vt" style="left:1020.5px;top:429.5px;color:#A4A6A8;transform-origin:0 0;transform:rotate(90deg) scaleX(1)">Device File Explorer</div>
</body></html>
